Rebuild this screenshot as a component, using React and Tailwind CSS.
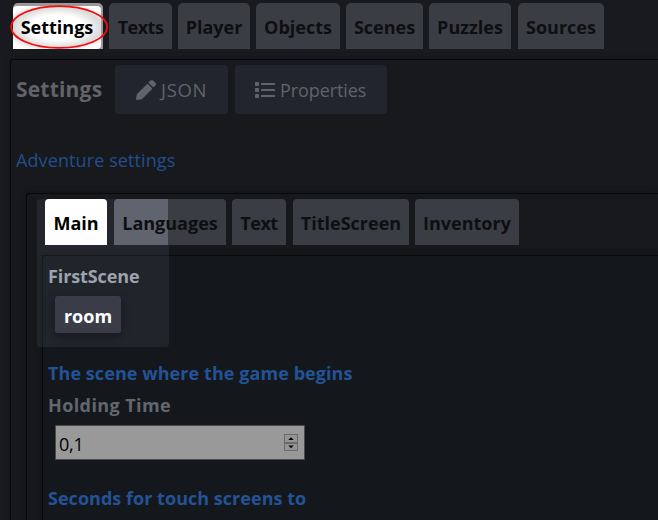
import React from "react";

const mainTabs = [
  { label: "Settings", size: "w-[90px] mr-[6px]", active: true },
  { label: "Texts", size: "w-[63px] mr-[6px] tracking-[-0.5px]" },
  { label: "Player", size: "w-[72px] mr-[6px]" },
  { label: "Objects", size: "w-[84px] mr-[6px]" },
  { label: "Scenes", size: "w-[77px] mr-[6px]" },
  { label: "Puzzles", size: "w-[82px] mr-[7px]" },
  { label: "Sources", size: "w-[86px]" },
];

const innerTabs = [
  { label: "Main", size: "w-[62px] mr-[7px] bg-white" },
  {
    label: "Languages",
    size: "w-[112px] mr-[6px] bg-[linear-gradient(90deg,#60646f_54px,#3b3d44_54px)]",
  },
  { label: "Text", size: "w-[54px] mr-[7px] bg-[#3b3d44] tracking-[-0.5px]" },
  { label: "TitleScreen", size: "w-[116px] mr-[6px] bg-[#3b3d44]" },
  { label: "Inventory", size: "w-[104px] bg-[#3b3d44]" },
];

function PencilIcon() {
  return (
    <svg className="h-5 w-5 shrink-0" viewBox="0 0 512 512" fill="currentColor">
      <path d="M497.9 142.1l-46.1 46.1c-4.7 4.7-12.3 4.7-17 0l-111-111c-4.7-4.7-4.7-12.3 0-17l46.1-46.1c18.7-18.7 49.1-18.7 67.9 0l60.1 60.1c18.8 18.7 18.8 49.1 0 67.9zM284.2 99.8L21.6 362.4.4 483.9c-2.9 16.4 11.4 30.6 27.8 27.8l121.5-21.3 262.6-262.6c4.7-4.7 4.7-12.3 0-17l-111-111c-4.8-4.7-12.4-4.7-17.1 0z" />
    </svg>
  );
}

function ListIcon() {
  return (
    <svg className="h-4 w-5 shrink-0" viewBox="0 0 20 16" fill="currentColor">
      <rect x="0" y="0" width="4" height="4" rx=".7" />
      <rect x="0" y="6" width="4" height="4" rx=".7" />
      <rect x="0" y="12" width="4" height="4" rx=".7" />
      <rect x="6" y="1" width="14" height="2" rx=".5" />
      <rect x="6" y="7" width="14" height="2" rx=".5" />
      <rect x="6" y="13" width="14" height="2" rx=".5" />
    </svg>
  );
}

export default function App() {
  return (
    <div className="h-[520px] w-[658px] overflow-hidden whitespace-nowrap bg-[#191a1f] pt-[3px] font-['Open_Sans','Noto_Sans',sans-serif] text-[18px] leading-6">
      <nav className="relative flex h-[46px] pl-[13px] font-bold text-[#0e0f11]">
        {mainTabs.map((t) => (
          <div
            key={t.label}
            className={`flex shrink-0 justify-center rounded-t-[5px] ${t.size} ${
              t.active ? "bg-[#999] pr-[2px] pt-[3px] text-black" : "bg-[#3b3d44] pt-3"
            }`}
          >
            {t.active ? (
              <span className="flex w-full justify-center rounded-t-[4px] rounded-br-[4px] bg-[radial-gradient(ellipse_54px_25px_at_center,#fff_50%,#dadada_82%,#fff_100%)] pt-[9px]">
                {t.label}
              </span>
            ) : (
              t.label
            )}
          </div>
        ))}
        <svg className="absolute left-[10px] top-[2px] h-[44px] w-[98px]" viewBox="0 0 98 44" fill="none">
          <ellipse cx="49.2" cy="22" rx="48" ry="20.8" stroke="#f50c10" strokeWidth="1.8" />
        </svg>
      </nav>

      <section className="ml-[10px] mt-[10px] h-[480px] rounded-tl-[3px] border-l border-t border-[#07080b] bg-[#18191c] shadow-[0_0_6px_rgba(0,0,0,.3)]">
        <div className="flex h-[60px] pl-[5px] pt-[5px] text-[#60646a]">
          <h1 className="w-[99px] pt-3 text-[21px] font-bold tracking-[0.2px]">Settings</h1>
          <button className="flex h-[49px] w-[113px] items-center rounded bg-[#22252d] pl-[21px]">
            <PencilIcon />
            <span className="ml-[5px] text-[18.5px] tracking-[0.7px]">JSON</span>
          </button>
          <button className="ml-[7px] flex h-[49px] w-[152px] items-center rounded bg-[#22252d] pl-[20px]">
            <ListIcon />
            <span className="ml-[5px] tracking-[-0.1px]">Properties</span>
          </button>
        </div>
        <p className="pl-[5px] pt-7 text-[#214e8d] tracking-[0.1px]">Adventure settings</p>

        <section className="relative ml-[15px] mt-[21px] h-[340px] rounded-tl-[3px] border-l border-t border-[#07080b] bg-[#17181b] pt-[5px] shadow-[0_0_6px_rgba(0,0,0,.3)]">
          <div className="pointer-events-none absolute left-[10px] top-[5px] z-10 h-[148px] w-[132px] rounded-[4px] bg-[#8c98b2]/11" />
          <nav className="relative z-20 flex h-[46px] pl-[18px] font-bold text-[#0e0f11]">
            {innerTabs.map((t) => (
              <div key={t.label} className={`flex shrink-0 justify-center rounded-t-[4px] pt-3 ${t.size} ${t.label === "Main" ? "text-black" : ""}`}>
                {t.label}
              </div>
            ))}
          </nav>

          <section className="ml-[15px] mt-[10px] h-[280px] rounded-tl-[3px] border-l border-t border-[#07080b] bg-[#14171b] pl-[5px] pt-[9px] font-bold shadow-[0_0_6px_rgba(0,0,0,.3)]">
            <div className="relative z-20 -mt-px tracking-[-0.1px] text-[#9ca3ae]">FirstScene</div>
            <div className="relative z-20 ml-[7px] mt-[8px] flex h-[37px] w-[66px] justify-center rounded-[3px] bg-[#3a3d48] pt-2 text-white shadow-[0_3px_8px_rgba(0,0,0,.35)]">
              room
            </div>
            <p className="mt-[28px] tracking-[0.07px] text-[#235396]">The scene where the game begins</p>
            <div className="mt-2 tracking-[0.4px] text-[#63676d]">Holding Time</div>
            <div className="ml-[7px] mt-[8px] flex h-[35px] w-[250px] items-center justify-between border border-[#4a4a4b] bg-[#999] pl-[3px] pr-[5px] font-normal text-black">
              <span className="pt-[3px] tracking-[-0.2px]">0,1</span>
              <svg className="h-[17px] w-[15px]" viewBox="0 0 15 17">
                <rect x=".5" y=".5" width="13" height="16" fill="#949494" stroke="#6b6b6b" />
                <path d="M1 9h12" stroke="#6b6b6b" strokeWidth="2" />
                <path d="M4.3 6l2.7-2.8 2.7 2.8zM4.3 11.5h5.4l-2.7 2.8z" fill="#000" />
              </svg>
            </div>
            <p className="mt-[26px] tracking-[0.03px] text-[#235396]">Seconds for touch screens to</p>
          </section>
        </section>
      </section>
    </div>
  );
}
